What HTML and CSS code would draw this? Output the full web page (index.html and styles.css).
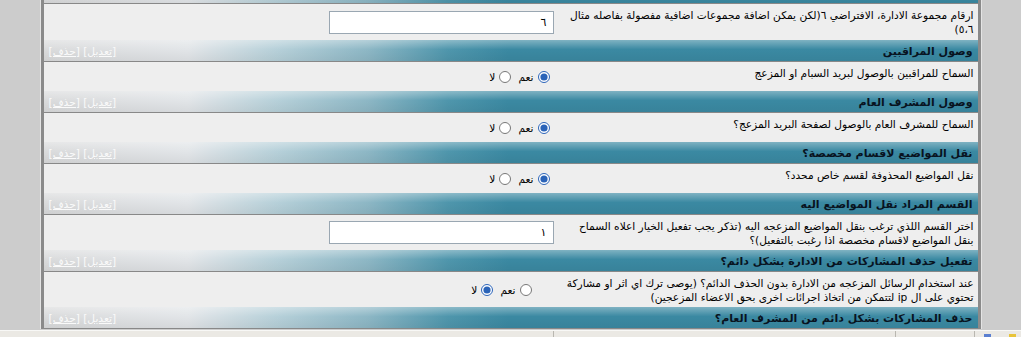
FILE: index.html
```html
<!DOCTYPE html>
<html lang="ar" dir="rtl">
  <head>
    <meta charset="UTF-8" />
    <meta name="viewport" content="width=device-width, initial-scale=1.0" />
    <title>اعدادات البريد المزعج</title>
    <link rel="stylesheet" href="styles.css">
  </head>
  <body>
    <div class="page">
      <!-- header of the previous setting, scrolled out of view -->
      <div class="head"></div>
      <div class="opt opt-tall">
        <div class="desc">ارقام مجموعة الادارة، الافتراضي ٦(لكن يمكن اضافة مجموعات اضافية مفصولة بفاصله مثال ٥،٦)</div>
        <div class="ctrl"><input type="text" class="form-control" value="٦" /></div>
      </div>

      <div class="head">
        <div class="head-title">وصول المراقبين</div>
        <div class="head-links"><a href="#">[تعديل]</a> <a href="#">[حذف]</a></div>
      </div>
      <div class="opt">
        <div class="desc">السماح للمراقبين بالوصول لبريد السبام او المزعج</div>
        <div class="ctrl">
          <label><input type="radio" name="mod" checked /> نعم</label>
          <label><input type="radio" name="mod" /> لا</label>
        </div>
      </div>

      <div class="head">
        <div class="head-title">وصول المشرف العام</div>
        <div class="head-links"><a href="#">[تعديل]</a> <a href="#">[حذف]</a></div>
      </div>
      <div class="opt">
        <div class="desc">السماح للمشرف العام بالوصول لصفحة البريد المزعج؟</div>
        <div class="ctrl">
          <label><input type="radio" name="smod" checked /> نعم</label>
          <label><input type="radio" name="smod" /> لا</label>
        </div>
      </div>

      <div class="head">
        <div class="head-title">نقل المواضيع لاقسام مخصصة؟</div>
        <div class="head-links"><a href="#">[تعديل]</a> <a href="#">[حذف]</a></div>
      </div>
      <div class="opt">
        <div class="desc">نقل المواضيع المحذوفة لقسم خاص محدد؟</div>
        <div class="ctrl">
          <label><input type="radio" name="move" checked /> نعم</label>
          <label><input type="radio" name="move" /> لا</label>
        </div>
      </div>

      <div class="head">
        <div class="head-title">القسم المراد نقل المواضيع اليه</div>
        <div class="head-links"><a href="#">[تعديل]</a> <a href="#">[حذف]</a></div>
      </div>
      <div class="opt opt-double">
        <div class="desc">اختر القسم اللذي ترغب بنقل المواضيع المزعجه اليه (تذكر يجب تفعيل الخيار اعلاه السماح بنقل المواضيع لاقسام مخصصة اذا رغبت بالتفعيل)؟</div>
        <div class="ctrl"><input type="text" class="form-control" value="١" /></div>
      </div>

      <div class="head">
        <div class="head-title">تفعيل حذف المشاركات من الادارة بشكل دائم؟</div>
        <div class="head-links"><a href="#">[تعديل]</a> <a href="#">[حذف]</a></div>
      </div>
      <div class="opt opt-double">
        <div class="desc">عند استخدام الرسائل المزعجه من الادارة بدون الحذف الدائم؟ (يوصى ترك اي اثر او مشاركة تحتوي على ال ip لتتمكن من اتخاذ اجرائات اخرى بحق الاعضاء المزعجين)</div>
        <div class="ctrl ctrl-wide">
          <label><input type="radio" name="hard" /> نعم</label>
          <label><input type="radio" name="hard" checked /> لا</label>
        </div>
      </div>

      <div class="head">
        <div class="head-title">حذف المشاركات بشكل دائم من المشرف العام؟</div>
        <div class="head-links"><a href="#">[تعديل]</a> <a href="#">[حذف]</a></div>
      </div>
    </div>

    <div class="statusbar">
      <span class="seg seg-main"></span>
      <span class="seg seg-mid"></span>
      <span class="seg seg-zone"></span>
      <span class="seg seg-icons"><i class="ico ico-blue"></i><i class="ico ico-yellow"></i></span>
    </div>
  </body>
</html>
```

FILE: styles.css
```css
body {
  margin: 0;
  background-color: #cccccc;
  font-family: "DejaVu Sans", Tahoma, sans-serif;
  font-size: 10.6px;
  color: #000;
  overflow: hidden;
}
.page {
  width: 934px;
  margin: -18px auto 0;
  border-left: 3px solid #8a8a8a;
  border-right: 3px solid #8a8a8a;
  box-shadow: -1px 0 0 #e4e4e4, 1px 0 0 #e4e4e4;
}
.head {
  display: flex;
  align-items: center;
  height: 21px;
  border-bottom: 1px solid #888;
  background:
    linear-gradient(to bottom, rgba(255, 255, 255, 0.35), rgba(255, 255, 255, 0) 45%, rgba(0, 0, 0, 0.05)),
    linear-gradient(to left, #3a89a2 0, #3b89a2 470px, #4f96ac 530px, #8db7c5 610px, #b6d0d9 700px, #e2e5e8 790px, #dadbdc 934px);
}
.head-title {
  width: 420px;
  box-sizing: border-box;
  padding: 2px 5px 0;
  font-size: 11px;
  font-weight: bold;
  color: #08131f;
}
.head-links {
  flex: 1;
  text-align: left;
  padding-left: 5px;
}
.head-links a {
  color: #fafafa;
}
.opt {
  display: flex;
  height: 29px;
  background-color: #eeeeee;
}
.opt-tall {
  height: 36px;
}
.opt-double {
  height: 35px;
}
.desc {
  width: 420px;
  box-sizing: border-box;
  padding: 4px 4px 0;
  line-height: 14px;
}
.ctrl {
  flex: 1;
  display: flex;
  align-items: center;
  padding: 0 4px;
}
.ctrl-wide {
  padding-right: 22px;
}
.ctrl label {
  display: flex;
  align-items: center;
  margin-left: 3px;
}
input[type="radio"] {
  width: 12px;
  height: 12px;
  margin: 0 4px 0 4px;
  accent-color: #2a63b8;
}
.form-control {
  width: 225px;
  height: 23px;
  box-sizing: border-box;
  padding: 2px 6px;
  border: 1px solid #9aa7b2;
  background-color: #fff;
  font-family: "DejaVu Sans", Tahoma, sans-serif;
  font-size: 11px;
}
.statusbar {
  display: flex;
  direction: ltr;
  height: 12px;
  margin-top: 1px;
  background-color: #ebe9e4;
  border-top: 1px solid #f8f8f6;
}
.seg {
  border-right: 1px solid #b9b7b0;
}
.seg-main {
  width: 553px;
}
.seg-mid {
  width: 341px;
}
.seg-zone {
  width: 78px;
}
.seg-icons {
  flex: 1;
  border-right: none;
  display: flex;
  gap: 18px;
  padding: 3px 0 0 9px;
}
.ico {
  width: 7px;
  height: 8px;
}
.ico-blue {
  background-color: #5b7fd0;
}
.ico-yellow {
  background-color: #e8c43a;
}
```
